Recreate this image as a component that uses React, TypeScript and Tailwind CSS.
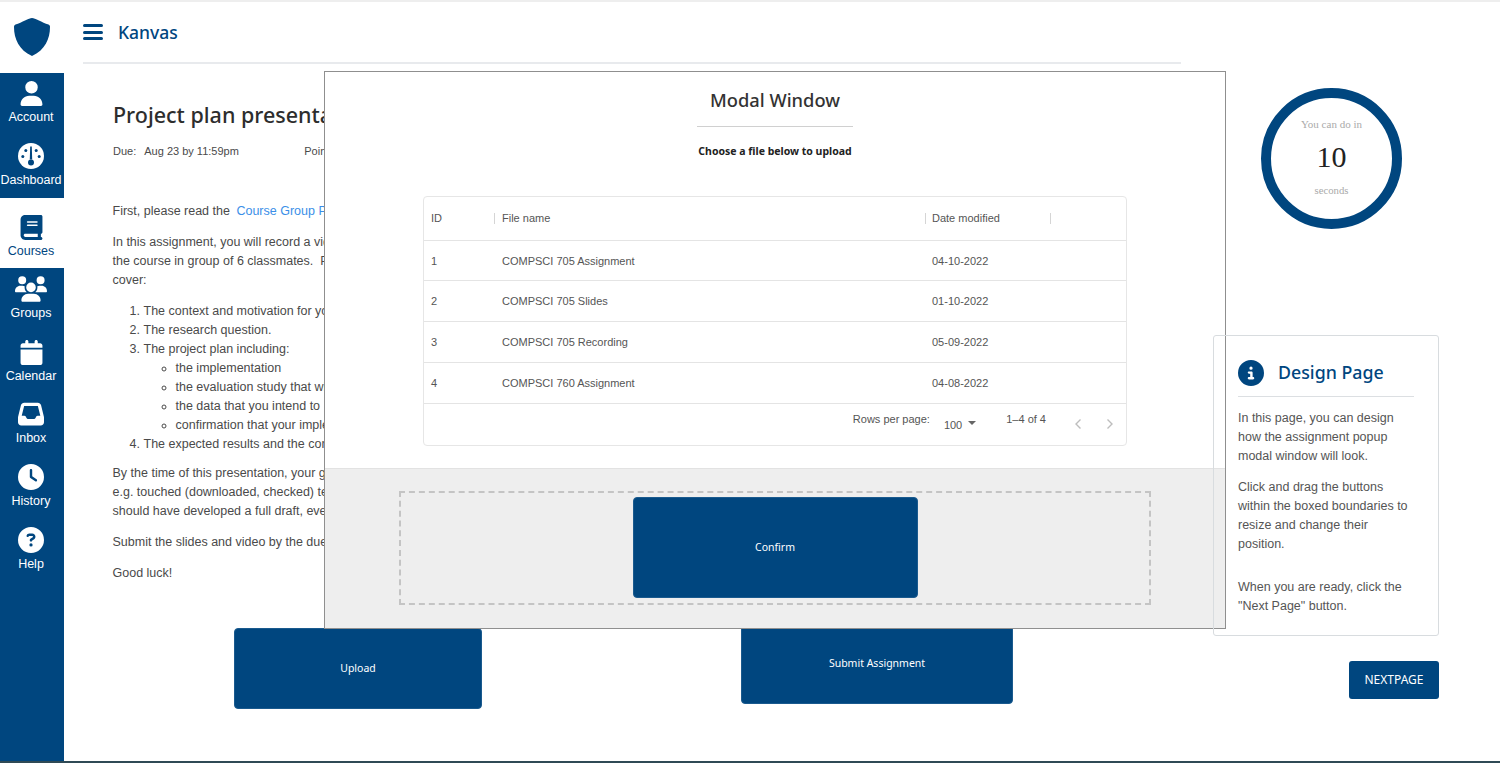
import React from "react";
import { FaUser, FaBook, FaUsers, FaCalendar, FaInbox, FaClock, FaCircleQuestion, FaCircleInfo } from "react-icons/fa6";

const BLUE = "#00467f";

function DashIcon() {
  return (
    <svg width="26" height="26" viewBox="0 0 26 26">
      <circle cx="13" cy="13" r="13" fill="#fff" />
      <path d="M12.2 3.5h1.6l.4 13h-2.4z" fill={BLUE} />
      <circle cx="13" cy="19.5" r="3" fill={BLUE} />
      <circle cx="7.8" cy="7.5" r="1.5" fill={BLUE} />
      <circle cx="18.2" cy="7.5" r="1.5" fill={BLUE} />
      <circle cx="4.8" cy="13.5" r="1.5" fill={BLUE} />
      <circle cx="21.2" cy="13.5" r="1.5" fill={BLUE} />
    </svg>
  );
}

function NavItem({ icon, label, h }: { icon: React.ReactNode; label: string; h: string }) {
  return (
    <div className={`flex flex-col items-center pr-[2px] ${h}`}>
      <div className="flex h-[26px] items-center justify-center">{icon}</div>
      <span className="mt-[2px] whitespace-nowrap text-[12.5px] leading-[18px]">{label}</span>
    </div>
  );
}

function Sidebar() {
  return (
    <aside className="flex w-16 shrink-0 flex-col font-['Liberation_Sans',sans-serif]">
      <div className="flex h-[71px] items-start justify-center pt-[16px]">
        <svg width="36" height="38" viewBox="0 0 36 38">
          <path
            d="M18 0 C 21 0 28 4.5 34.5 6.5 C 35.5 7 36 7.5 36 9 C 36 21 31 32 18 38 C 5 32 0 21 0 9 C 0 7.5 .5 7 1.5 6.5 C 8 4.5 15 0 18 0Z"
            fill={BLUE}
          />
        </svg>
      </div>
      <div className="flex h-[125px] flex-col bg-[#00467f] pt-[7px] text-white">
        <NavItem h="h-[63px]" label="Account" icon={<FaUser size={25} />} />
        <NavItem h="h-[55px]" label="Dashboard" icon={<DashIcon />} />
      </div>
      <div className="flex h-[70px] flex-col pt-[16px] text-[#00467f]">
        <NavItem h="h-[54px]" label="Courses" icon={<FaBook size={25} />} />
      </div>
      <div className="flex flex-1 flex-col bg-[#00467f] pt-[8px] text-white">
        <NavItem h="h-[63px]" label="Groups" icon={<FaUsers size={32} />} />
        <NavItem h="h-[62px]" label="Calendar" icon={<FaCalendar size={25} />} />
        <NavItem h="h-[63px]" label="Inbox" icon={<FaInbox size={26} />} />
        <NavItem h="h-[63px]" label="History" icon={<FaClock size={26} />} />
        <NavItem h="h-[63px]" label="Help" icon={<FaCircleQuestion size={26} />} />
      </div>
    </aside>
  );
}

function Assignment() {
  return (
    <div className="pl-[48.5px] font-['Liberation_Sans',sans-serif] text-[12.5px] leading-[19px] text-[#4a4a4a]">
      <h1 className="mt-[37px] ml-[0.5px] font-['Noto_Sans',sans-serif] text-[21.5px] leading-[28px] font-medium text-[#2d2d2d]">
        Project plan presentation
      </h1>
      <div className="mt-[15px] ml-[0.5px] flex text-[11px] leading-[14px]">
        <span>Due:</span>
        <span className="ml-[8px] w-[160px]">Aug 23 by 11:59pm</span>
        <span>Points 10</span>
      </div>
      <p className="mt-[44px]">
        First, please read the <span className="ml-[3px] text-[#3b8fe8]">Course Group Project</span>
      </p>
      <p className="mt-[12px]">
        In this assignment, you will record a video
        <br />
        the course in group of 6 classmates.&nbsp; Please
        <br />
        cover:
      </p>
      <ol className="mt-[12px] list-decimal pl-[31px]">
        <li>The context and motivation for your</li>
        <li>The research question.</li>
        <li>
          The project plan including:
          <ul className="list-[circle] pl-[32px]">
            <li>the implementation</li>
            <li>the evaluation study that will</li>
            <li>the data that you intend to</li>
            <li>confirmation that your implementation</li>
          </ul>
        </li>
        <li>The expected results and the contribution</li>
      </ol>
      <p className="mt-[10px]">
        By the time of this presentation, your group
        <br />
        e.g. touched (downloaded, checked) test data
        <br />
        should have developed a full draft, even if
      </p>
      <p className="mt-[12px]">Submit the slides and video by the due date.</p>
      <p className="mt-[12px]">Good luck!</p>
    </div>
  );
}

function ActionRow() {
  return (
    <div className="mt-[39px] flex items-start pl-[170px] font-['Noto_Sans',sans-serif] text-[10.5px] text-white">
      <button className="mt-[6px] flex h-[81px] w-[248px] items-center justify-center rounded-[4px] border border-[#1a5a8e] bg-[#00467f]">
        Upload
      </button>
      <button className="ml-[259px] flex h-[82px] w-[272px] items-center justify-center rounded-[4px] border border-[#1a5a8e] bg-[#00467f] pt-[2px]">
        Submit Assignment
      </button>
    </div>
  );
}

const rows = [
  { id: "1", name: "COMPSCI 705 Assignment", date: "04-10-2022", h: "h-[40px] pt-[2px]" },
  { id: "2", name: "COMPSCI 705 Slides", date: "01-10-2022", h: "h-[41px]" },
  { id: "3", name: "COMPSCI 705 Recording", date: "05-09-2022", h: "h-[41px]" },
  { id: "4", name: "COMPSCI 760 Assignment", date: "04-08-2022", h: "h-[41px]" },
];

function FileTable() {
  return (
    <div className="mx-[98px] mt-[37px] h-[250px] rounded-[4px] border border-[#e6e6e6] font-['Liberation_Sans',sans-serif] text-[11px] text-[#555]">
      <div className="flex h-[44px] items-center border-b border-[#e4e4e4]">
        <div className="w-[70px] pl-[7px]">ID</div>
        <div className="h-[11px] w-px bg-[#d5d5d5]" />
        <div className="w-[430px] pl-[7px]">File name</div>
        <div className="h-[11px] w-px bg-[#d5d5d5]" />
        <div className="w-[124px] pl-[6px]">Date modified</div>
        <div className="h-[11px] w-px bg-[#d5d5d5]" />
      </div>
      {rows.map((r) => (
        <div key={r.id} className={`flex items-center border-b border-[#e4e4e4] ${r.h}`}>
          <div className="w-[71px] pl-[7px]">{r.id}</div>
          <div className="w-[431px] pl-[7px]">{r.name}</div>
          <div className="pl-[6px]">{r.date}</div>
        </div>
      ))}
      <div className="flex h-[41px] items-start justify-end pr-[12px] text-[#555]">
        <span className="mt-[7px]">Rows per page:</span>
        <span className="mt-[13px] ml-[14px]">100</span>
        <svg className="mt-[17px] ml-[6px]" width="8" height="4" viewBox="0 0 8 4">
          <path d="M0 0h8L4 4z" fill="#666" />
        </svg>
        <span className="mt-[7px] ml-[30px]">1–4 of 4</span>
        <svg className="mt-[14px] ml-[28px]" width="8" height="12" viewBox="0 0 8 12" fill="none">
          <path d="M6.5 1.5 2 6l4.5 4.5" stroke="#bdbdbd" strokeWidth="1.4" />
        </svg>
        <svg className="mt-[14px] ml-[24px]" width="8" height="12" viewBox="0 0 8 12" fill="none">
          <path d="M1.5 1.5 6 6l-4.5 4.5" stroke="#bdbdbd" strokeWidth="1.4" />
        </svg>
      </div>
    </div>
  );
}

function Modal() {
  return (
    <div className="absolute top-[71px] left-[324px] z-10 flex h-[558px] w-[902px] flex-col border border-[#8f8f8f] bg-white">
      <div className="h-[397px] border-b border-[#e2e2e2]">
        <h2 className="mt-[15px] text-center font-['Noto_Sans',sans-serif] text-[18.3px] leading-[26px] font-medium text-[#333]">
          Modal Window
        </h2>
        <div className="mx-auto mt-[13px] h-px w-[156px] bg-[#d0d0d0]" />
        <p className="mt-[17px] text-center font-['Noto_Sans',sans-serif] text-[10.5px] leading-[14px] font-bold text-[#222]">
          Choose a file below to upload
        </p>
        <div className="pt-px">
          <FileTable />
        </div>
      </div>
      <div className="flex-1 bg-[#eeeeee] pt-[22px]">
        <div className="mx-auto flex h-[114px] w-[752px] items-start justify-center border-2 border-dashed border-[#c4c4c4] pt-[4px]">
          <button className="flex h-[101px] w-[285px] items-center justify-center rounded-[4px] border border-[#1a5a8e] bg-[#00467f] font-['Noto_Sans',sans-serif] text-[10.5px] text-white">
            Confirm
          </button>
        </div>
      </div>
    </div>
  );
}

function Timer() {
  return (
    <div className="ml-[48px] flex h-[141px] w-[141px] flex-col items-center rounded-full border-[10px] border-[#00467f] font-['Liberation_Serif',serif]">
      <span className="mt-[19px] text-[11px] leading-[14px] text-[#aaaaaa]">You can do in</span>
      <span className="mt-[7px] text-[30px] leading-[38px] text-[#222]">10</span>
      <span className="mt-[7px] text-[10.7px] leading-[14px] text-[#aaaaaa]">seconds</span>
    </div>
  );
}

function DesignPanel() {
  return (
    <div className="relative z-20 mt-[106px] h-[301px] w-[226px] rounded-[3px] border border-[#d8dcdf] px-[24px] pt-[24px] font-['Liberation_Sans',sans-serif] text-[12.5px] leading-[19px] text-[#555]">
      <div className="flex h-[26px] items-center text-[#00467f]">
        <FaCircleInfo size={26} />
        <span className="mt-[-2px] ml-[14px] font-['Noto_Sans',sans-serif] text-[17.8px] font-medium">Design Page</span>
      </div>
      <div className="mt-[10px] h-px bg-[#dcdfe2]" />
      <p className="mt-[12px]">
        In this page, you can design
        <br />
        how the assignment popup
        <br />
        modal window will look.
      </p>
      <p className="mt-[12px]">
        Click and drag the buttons
        <br />
        within the boxed boundaries to
        <br />
        resize and change their
        <br />
        position.
      </p>
      <p className="mt-[24px]">
        When you are ready, click the
        <br />
        "Next Page" button.
      </p>
    </div>
  );
}

export default function App() {
  return (
    <div className="relative flex h-[763px] w-[1500px] flex-col overflow-hidden bg-white">
      <div className="h-[2px] bg-[#eeeeee]" />
      <div className="flex flex-1">
        <Sidebar />
        <main className="flex flex-1">
          <div className="w-[1136px] shrink-0">
            <header className="mx-[19px] flex h-[62px] items-start border-b-2 border-[#e8eaed] pt-[22px] text-[#00467f]">
              <div className="flex h-[16px] w-[20px] flex-col justify-between">
                <div className="h-[3px] rounded-full bg-[#00467f]" />
                <div className="h-[3px] rounded-full bg-[#00467f]" />
                <div className="h-[3px] rounded-full bg-[#00467f]" />
              </div>
              <span className="mt-[-4px] ml-[15px] font-['Noto_Sans',sans-serif] text-[17.5px] leading-[24px] font-medium">
                Kanvas
              </span>
            </header>
            <Assignment />
            <ActionRow />
          </div>
          <div className="flex flex-col pt-[86px] pl-[13px]">
            <Timer />
            <DesignPanel />
            <button className="mt-[25px] ml-[136px] flex h-[38px] w-[90px] items-center justify-center rounded-[3px] bg-[#00467f] font-['Noto_Sans',sans-serif] text-[12px] text-white">
              NEXTPAGE
            </button>
          </div>
        </main>
      </div>
      <div className="h-[2px] bg-[#2f4a55]" />
      <Modal />
    </div>
  );
}
